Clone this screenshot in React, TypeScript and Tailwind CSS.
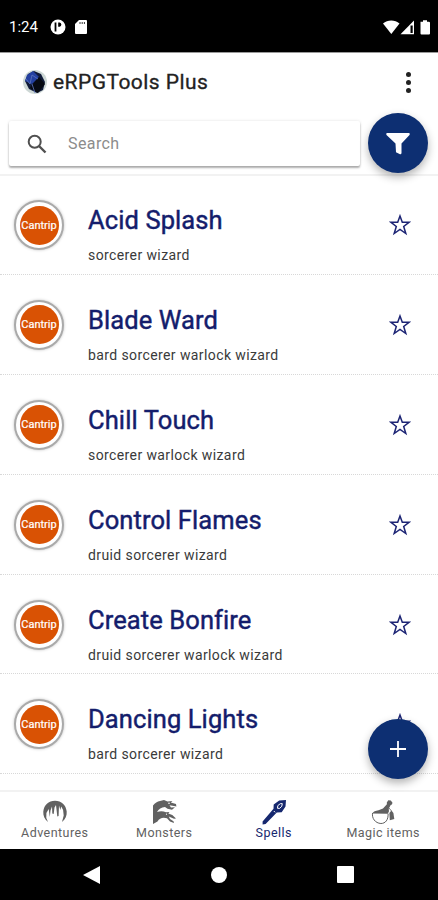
import { useState } from "react";

type Spell = { name: string; classes: string };

const spells: Spell[] = [
  { name: "Acid Splash", classes: "sorcerer wizard" },
  { name: "Blade Ward", classes: "bard sorcerer warlock wizard" },
  { name: "Chill Touch", classes: "sorcerer warlock wizard" },
  { name: "Control Flames", classes: "druid sorcerer wizard" },
  { name: "Create Bonfire", classes: "druid sorcerer warlock wizard" },
  { name: "Dancing Lights", classes: "bard sorcerer wizard" },
];

function CaveIcon({ className }: { className?: string }) {
  return (
    <svg viewBox="0 0 26 26" className={className} aria-hidden="true">
      <path
        d="M6 23C2.500 20 1 16.500 1.300 12.500 2 6 6.500 1.700 13 1.700S24 6 24.700 12.500c.3 4-1.200 7.500-4.700 10.500l1.700-6.500-.6-5.500-1.900-3.500-.9 3.500-1.300-4.500-.4 10.500-1.300.5-1.300-11.500-1.500 2.500-.8 6.500-1.400-.5-.3-7-1.500 4-.7 6.500-1.100-8-2.300 4-.1 5z"
        fill="currentColor"
      />
    </svg>
  );
}

function HydraIcon({ className }: { className?: string }) {
  return (
    <svg viewBox="0 0 26 26" className={className} aria-hidden="true">
      <path
        d="M2 25V6.500Q5 2.500 9 2l4-1 3.500 1.500 5-.5-1.700 1.400L25 5l.4 2.500-2.600-.5-4.300-.7 1.500 2.200 4-.3-3 2.500-4.500-1-2.500-1.700Q8.500 8.300 6 13q4.500-1.700 9 .2l3.500-.2-1.200 1.500 4 1.500 3.700 3.500-2 .2-5.200-2.200 1.200 2.500 3.500 2.200.5 1.800-4-1.500-3-3.200Q9.500 17.500 6.500 22.500z"
        fill="currentColor"
      />
      <circle cx="18" cy="4.300" r=".8" fill="#fff" />
      <circle cx="15.500" cy="15.200" r=".6" fill="#fff" />
    </svg>
  );
}

function WandIcon({ className }: { className?: string }) {
  return (
    <svg viewBox="0 0 26 26" className={className} aria-hidden="true">
      <path d="M1.600 22.500 12.500 9.800l.2-4.300 5.500-4 6.800-.6-.5 6.600-3.800 5.700-4.900.3L4.600 25 1.600 25.400z" fill="currentColor" />
      <path d="m16.500 9.300.3-2.700 2.500-1.900 2-.1-.5 2.600-2.100 2.200zM12.800 12l1.300 1.300" fill="none" stroke="#fff" strokeWidth="1" />
    </svg>
  );
}

function PotionIcon({ className }: { className?: string }) {
  return (
    <svg viewBox="0 0 26 26" className={className} aria-hidden="true">
      <path
        d="m18.300 1.200 2.500.3 1.700 2.300-.6 1.700-1.200.4-2 3.800.3 2.500-1.200 2.600-15.600-.3c1.200-2 3.300-2.700 6.300-3.200l4.500-1.800 3.900-4.300-.1-1.700z"
        fill="currentColor"
      />
      <path d="M2.600 14c-1 5 2.500 10.200 8.300 10.500 4.500 0 7.500-3.600 7.200-9.800" fill="none" stroke="currentColor" strokeWidth="1" />
      <path d="m19 9 2.500 3" stroke="currentColor" strokeWidth=".8" />
      <path d="m19.400 14 2-2.400 2 2.400.9 6-4.500 1.200z" fill="currentColor" />
    </svg>
  );
}

const tabs = [
  { label: "Adventures", Icon: CaveIcon },
  { label: "Monsters", Icon: HydraIcon },
  { label: "Spells", Icon: WandIcon },
  { label: "Magic items", Icon: PotionIcon },
];

function StatusBar() {
  return (
    <div className="flex h-[52px] shrink-0 items-center bg-black pl-[9px] pr-[7px] pt-[2px] text-white">
      <span className="w-[41px] text-[15px] leading-none">1:24</span>
      <svg viewBox="0 0 16 16" className="size-4" aria-hidden="true">
        <circle cx="8" cy="8" r="7.500" fill="#fff" />
        <path d="M5.500 3.500v9" stroke="#000" strokeWidth="1.800" />
        <path d="M8.200 3.500v4.200h1.500q1.600-.3 1.600-2.100t-1.600-2.100z" fill="#000" />
      </svg>
      <svg viewBox="0 0 12 14" className="ml-[9px] h-[14px] w-3" aria-hidden="true">
        <path d="M4 0h7q1 0 1 1v12q0 1-1 1H1q-1 0-1-1V4z" fill="#fff" />
        <path d="M5 2v2M7.200 2v2M9.400 2v2" stroke="#000" strokeWidth=".8" />
      </svg>
      <svg viewBox="0 0 48 15" className="ml-auto h-[15px] w-12" aria-hidden="true">
        <path d="M0 3.500C4.500-.5 12-.5 16.500 3.500L8.300 14z" fill="#fff" />
        <path d="M17.500 14.200 31 .5v13.700z" fill="#fff" />
        <path d="M27.500 5.500v7.500h2.200V5.500z" fill="#000" />
        <path d="M38.200 1.700h1.800V.3h4v1.400h1.700q1.300 0 1.300 1V13.500q0 1-1 1h-7.500q-1 0-1-1V1.700z" fill="#fff" />
      </svg>
    </div>
  );
}

function Header() {
  return (
    <header className="flex h-[61px] shrink-0 items-center border-t border-[#999] pb-[2px] pr-[27px] pl-[22px]">
      <svg viewBox="0 0 26 26" className="size-[26px]" aria-hidden="true">
        <circle cx="13" cy="13" r="12" fill="#cdd7d5" />
        <path d="m12 2 7 3 4 8-2 8-6 3-8-4-4-8 3-7z" fill="#101a38" />
        <path d="m11 2 6 6-7 7-7-3 2-6z" fill="#2440a0" />
        <path d="m17 8 6 7-7 9-8-5 2-3z" fill="#070a12" />
        <path d="m4 10 4 5 2-9 6 4M10 15l3 9" fill="none" stroke="#6076bd" strokeWidth=".8" />
      </svg>
      <h1 className="ml-[5px] text-[21px] leading-none tracking-[.45px] text-[#222] [-webkit-text-stroke:.3px_#222]">
        eRPGTools Plus
      </h1>
      <button className="ml-auto flex flex-col gap-[3px]" aria-label="More options">
        <i className="size-[5px] rounded-full bg-[#222]" />
        <i className="size-[5px] rounded-full bg-[#222]" />
        <i className="size-[5px] rounded-full bg-[#222]" />
      </button>
    </header>
  );
}

function SearchBar() {
  return (
    <div className="relative z-10 flex h-[63px] shrink-0 border-b-2 border-[#f2f2f2] pl-[9px]">
      <label className="mt-[8px] flex h-[45px] w-[351px] items-center rounded-[2px] bg-white pl-[18px] shadow-[0_2px_2px_rgba(0,0,0,.3),0_0_3px_rgba(0,0,0,.12)]">
        <svg viewBox="0 0 20 20" className="size-5" fill="none" stroke="#505050" strokeWidth="2" aria-hidden="true">
          <circle cx="7.700" cy="7.700" r="6" />
          <path d="m12 12 6.500 6.500" strokeWidth="2.400" />
        </svg>
        <input
          className="ml-[21px] w-60 text-[16px] tracking-[.4px] outline-none placeholder:text-[#8c8c8c]"
          placeholder="Search"
        />
      </label>
      <button
        className="ml-[8px] grid size-[60px] place-items-center rounded-full bg-[#0d2f72] shadow-[0_4px_9px_rgba(0,0,0,.3)]"
        aria-label="Filter"
      >
        <svg viewBox="0 0 26 23" className="h-[23px] w-[26px]" aria-hidden="true">
          <path d="M2 1h22q1.500.5.500 2l-8 8.500V21q-.2 1.500-1.500 1.200l-4-2-.5-8.700L1.500 3Q.5 1.500 2 1" fill="#fff" />
        </svg>
      </button>
    </div>
  );
}

function SpellRow({ spell }: { spell: Spell }) {
  return (
    <li className="flex h-[99.900px] shrink-0 border-b-[1.500px] border-dotted border-[#d8d8d8] pl-[14px]">
      <div className="mt-[25px] grid size-[50px] shrink-0 place-items-center rounded-full border-2 border-[#aaa] bg-white shadow-[0_0_3px_rgba(0,0,0,.25)]">
        <span className="grid size-[39px] place-items-center rounded-full bg-[#d95204] text-[11px] leading-none text-white [-webkit-text-stroke:.2px_#fff]">
          Cantrip
        </span>
      </div>
      <div className="ml-6 w-[301px] pt-[28px]">
        <h2 className="text-[25.500px] leading-[34px] tracking-[.1px] text-[#141d6c] [-webkit-text-stroke:.45px_#141d6c]">
          {spell.name}
        </h2>
        <p className="mt-[9px] text-[14px] leading-[18px] tracking-[.4px] text-[#3a3a3a]">{spell.classes}</p>
      </div>
      <svg viewBox="0 0 22 22" className="mt-[39px] size-[22px]" aria-hidden="true">
        <path
          d="m11 2 2.300 6.300h6.700l-5.300 4.200 2.100 7-5.800-4.100-5.800 4.100 2.100-7L2 8.300h6.700z"
          fill="none"
          stroke="#1c2474"
          strokeWidth="1.500"
        />
      </svg>
    </li>
  );
}

export default function App() {
  const [active, setActive] = useState("Spells");

  return (
    <div className="relative flex h-[900px] w-[438px] flex-col overflow-hidden bg-white font-[Roboto,sans-serif]">
      <StatusBar />
      <Header />
      <SearchBar />
      <ul className="-mt-px flex min-h-0 flex-1 flex-col overflow-hidden">
        {spells.map((spell) => (
          <SpellRow key={spell.name} spell={spell} />
        ))}
      </ul>
      <button
        className="absolute top-[719px] left-[368px] grid size-[60px] place-items-center rounded-full bg-[#0d2f72] shadow-[0_4px_9px_rgba(0,0,0,.3)]"
        aria-label="Add spell"
      >
        <svg viewBox="0 0 16 16" className="size-4" stroke="#fff" strokeWidth="1.800" aria-hidden="true">
          <path d="M8 0v16M0 8h16" />
        </svg>
      </button>
      <nav className="grid h-[59px] shrink-0 grid-cols-4 border-t-2 border-[#f2f2f2] bg-white">
        {tabs.map(({ label, Icon }) => (
          <button
            key={label}
            onClick={() => setActive(label)}
            className={`flex flex-col items-center pt-[7px] ${
              label === active ? "text-[#16286f]" : "text-[#616161]"
            }`}
          >
            <Icon className="size-[26px]" />
            <span className="text-[12.500px] leading-[15px] tracking-[.45px]">{label}</span>
          </button>
        ))}
      </nav>
      <div className="flex h-[51px] shrink-0 items-center bg-black pl-[83px]">
        <svg viewBox="0 0 17 18" className="h-[18px] w-[17px]" aria-hidden="true">
          <path d="M0 9 17 0v18z" fill="#fff" />
        </svg>
        <i className="ml-[111px] size-4 rounded-full bg-white" />
        <i className="ml-[110px] size-[17px] rounded-[1px] bg-white" />
      </div>
    </div>
  );
}
